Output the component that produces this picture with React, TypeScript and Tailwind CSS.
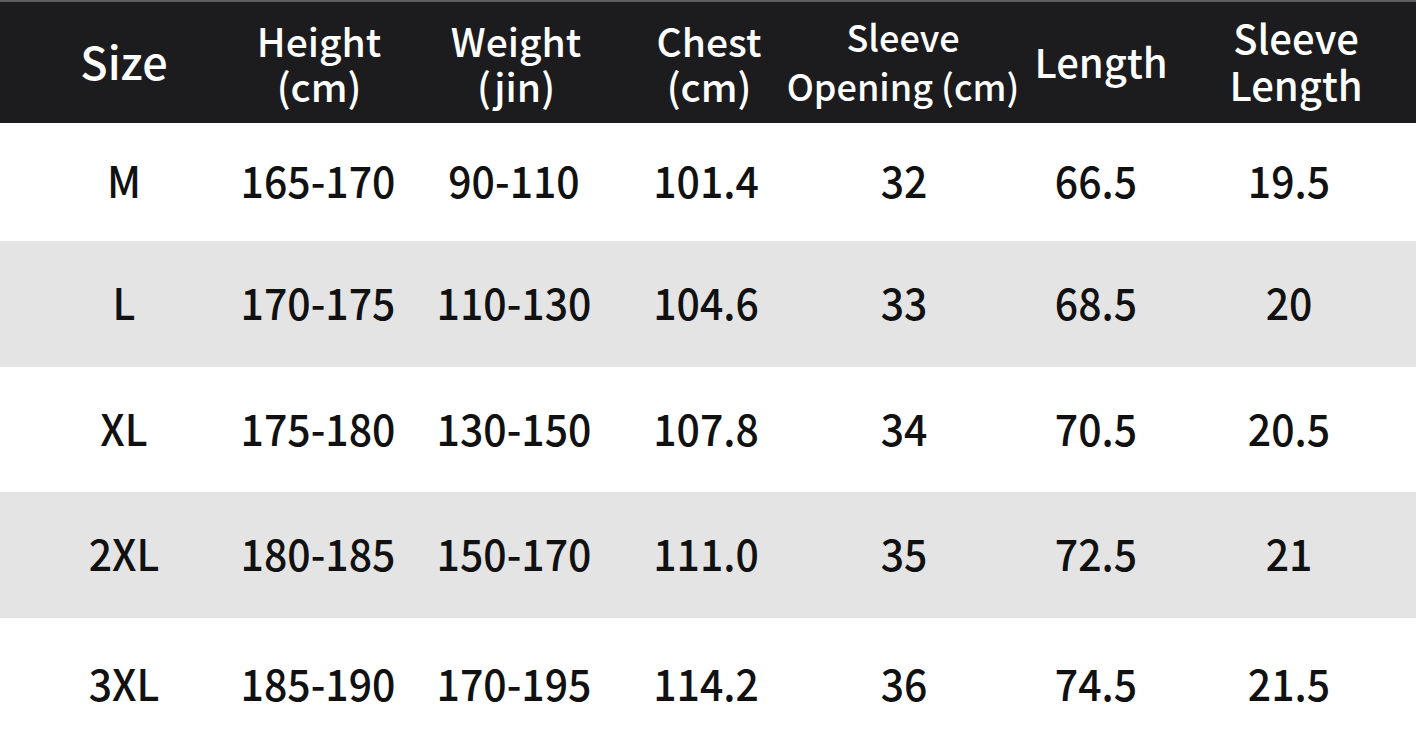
const headers: { lines: string[]; cls: string }[] = [
  { lines: ["Size"], cls: "text-[45px] leading-[48px]" },
  { lines: ["Height", "(cm)"], cls: "text-[39px] leading-[45px] pt-1" },
  { lines: ["Weight", "(jin)"], cls: "text-[39px] leading-[45px] pt-1" },
  { lines: ["Chest", "(cm)"], cls: "text-[39px] leading-[45px] pt-1" },
  { lines: ["Sleeve", "Opening (cm)"], cls: "text-[36px] leading-[49px]" },
  { lines: ["Length"], cls: "text-[40px] leading-[48px]" },
  { lines: ["Sleeve", "Length"], cls: "text-[40px] leading-[47px]" },
];

const rows = [
  ["M", "165-170", "90-110", "101.4", "32", "66.5", "19.5"],
  ["L", "170-175", "110-130", "104.6", "33", "68.5", "20"],
  ["XL", "175-180", "130-150", "107.8", "34", "70.5", "20.5"],
  ["2XL", "180-185", "150-170", "111.0", "35", "72.5", "21"],
  ["3XL", "185-190", "170-195", "114.2", "36", "74.5", "21.5"],
];

const rowHeights = ["h-[118px]", "h-[126px]", "h-[125px]", "h-[126px]", "h-[134px]"];

// header and body columns sit a few px apart in the chart
const headCols = "grid grid-cols-[248px_142px_252px_134px_254px_142px_248px]";
const bodyCols = "grid grid-cols-[248px_140px_252px_132px_264px_120px_266px]";

export default function App() {
  return (
    <div
      className="w-[1416px] h-[752px] overflow-hidden bg-white"
      style={{ fontFamily: '"Noto Sans CJK SC", "Noto Sans", sans-serif' }}
    >
      {/* Header */}
      <div className={`${headCols} h-[123px] bg-[#1c1b1e] border-t-2 border-[#5e5e5e] items-center text-white pb-1`}>
        {headers.map((h, i) => (
          <div
            key={i}
            className={`flex flex-col items-center font-medium whitespace-nowrap ${h.cls}`}
          >
            {h.lines.map((line) => (
              <span key={line}>{line}</span>
            ))}
          </div>
        ))}
      </div>

      {/* Rows */}
      {rows.map((r, ri) => (
        <div
          key={r[0]}
          className={`${bodyCols} ${rowHeights[ri]} items-center pb-1 text-[#111] ${ri % 2 === 1 ? "bg-[#e4e4e4]" : "bg-white"}`}
        >
          {r.map((cell, ci) => (
            <div key={ci} className="flex justify-center">
              <span className="text-[41px] font-medium whitespace-nowrap scale-y-[1.07]">{cell}</span>
            </div>
          ))}
        </div>
      ))}
    </div>
  );
}
